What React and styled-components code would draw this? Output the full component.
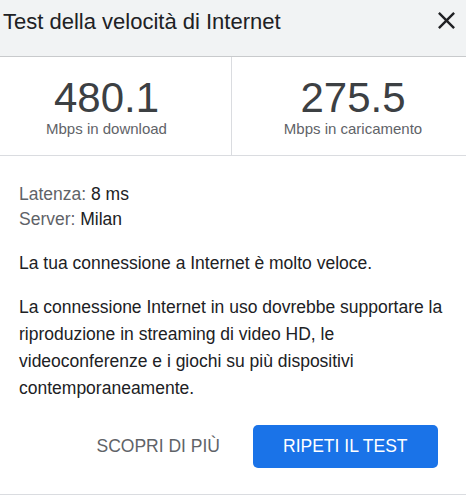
import React from 'react'
import styled, { createGlobalStyle } from 'styled-components'

const GlobalStyle = createGlobalStyle`
  body {
    margin: 0;
    background: #ffffff;
    font-family: "Liberation Sans", Arial, sans-serif;
  }
`

const Panel = styled.div`
  width: 466px;
  height: 498px;
  background: #ffffff;
  color: #202124;
  overflow: hidden;
`

const Header = styled.div`
  display: flex;
  justify-content: space-between;
  align-items: flex-start;
  height: 57px;
  padding: 6px 5px 0 3px;
  box-sizing: border-box;
  background: #f1f3f4;
  border-bottom: 1px solid #c8cacc;
`

const Title = styled.h1`
  margin: 3px 0 0;
  font-size: 22px;
  line-height: 25px;
  font-weight: 400;
  color: #202124;
`

const CloseButton = styled.button`
  display: flex;
  padding: 0;
  border: none;
  background: none;
  color: #202124;
  cursor: pointer;
`

const Stats = styled.div`
  display: grid;
  grid-template-columns: 231px 1fr;
  border-bottom: 1px solid #dadce0;
`

const Stat = styled.div`
  display: flex;
  flex-direction: column;
  align-items: center;
  padding: 18px 0 17px;
  padding-right: ${p => (p.$first ? '18px' : '0')};
  padding-left: ${p => (p.$first ? '0' : '8px')};
  border-left: ${p => (p.$first ? 'none' : '1px solid #dadce0')};
`

const Value = styled.div`
  font-size: 42px;
  line-height: 45px;
  color: #3c4043;
`

const Unit = styled.div`
  font-size: 15px;
  line-height: 18px;
  color: #5f6368;
`

const Body = styled.div`
  padding: 26px 19px 0;
  font-size: 17.5px;
`

const Info = styled.div`
  line-height: 25px;
  margin-bottom: 18px;
`

const Label = styled.span`
  color: #5f6368;
`

const Text = styled.p`
  margin: 0 0 17px;
  line-height: 27px;
  color: #202124;
`

const Footer = styled.div`
  display: flex;
  justify-content: flex-end;
  align-items: center;
  gap: 2px;
  padding: 6px 28px 26px 0;
  border-bottom: 1px solid #dadce0;
`

const Button = styled.button`
  height: 43px;
  padding: 0 30.5px;
  border: none;
  border-radius: 5px;
  font-family: "Liberation Sans", Arial, sans-serif;
  font-size: 17.5px;
  background: ${p => (p.$primary ? '#1a73e8' : 'transparent')};
  color: ${p => (p.$primary ? '#ffffff' : '#5f6368')};
  cursor: pointer;
`

export default function App() {
  return (
    <Panel>
      <GlobalStyle />
      <Header>
        <Title>Test della velocità di Internet</Title>
        <CloseButton aria-label="Chiudi">
          <svg width="29" height="29" viewBox="0 0 24 24" fill="currentColor">
            <path d="M19 6.41L17.59 5 12 10.59 6.41 5 5 6.41 10.59 12 5 17.59 6.41 19 12 13.41 17.59 19 19 17.59 13.41 12z" />
          </svg>
        </CloseButton>
      </Header>

      <Stats>
        <Stat $first>
          <Value>480.1</Value>
          <Unit>Mbps in download</Unit>
        </Stat>
        <Stat>
          <Value>275.5</Value>
          <Unit>Mbps in caricamento</Unit>
        </Stat>
      </Stats>

      <Body>
        <Info>
          <div><Label>Latenza:</Label> 8 ms</div>
          <div><Label>Server:</Label> Milan</div>
        </Info>
        <Text>La tua connessione a Internet è molto veloce.</Text>
        <Text>
          La connessione Internet in uso dovrebbe supportare la riproduzione in
          streaming di video HD, le videoconferenze e i giochi su più dispositivi
          contemporaneamente.
        </Text>
      </Body>

      <Footer>
        <Button>SCOPRI DI PIÙ</Button>
        <Button $primary>RIPETI IL TEST</Button>
      </Footer>
    </Panel>
  )
}
